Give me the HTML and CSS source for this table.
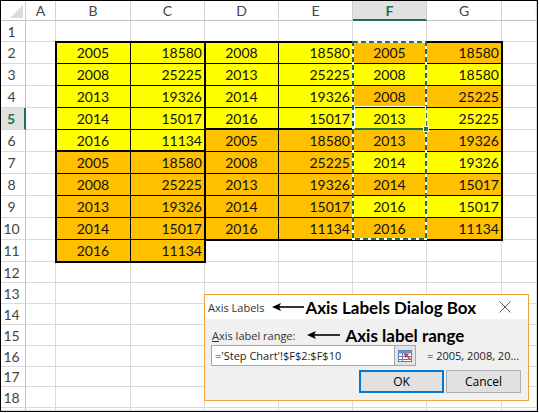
FILE: index.html
```html
<!DOCTYPE html>
<html>
<head>
<meta charset="utf-8">
<link rel="stylesheet" href="styles.css">
</head>
<body>
<div class="frame">
  <div class="sheet">
    <!-- header row -->
    <div class="c hd corner"><svg width="25" height="20" viewBox="0 0 25 20"><polygon points="22,4 22,17 9,17" fill="#dcdcdc"/></svg></div>
    <div class="c hd">A</div>
    <div class="c hd">B</div>
    <div class="c hd">C</div>
    <div class="c hd">D</div>
    <div class="c hd">E</div>
    <div class="c hd hd-sel">F</div>
    <div class="c hd">G</div>
    <div class="c hd hd-h">H</div>

    <!-- data blocks -->
    <div class="blk blk-bc">
      <div class="d y">2005</div><div class="d y n">18580</div>
      <div class="d y">2008</div><div class="d y n">25225</div>
      <div class="d y">2013</div><div class="d y n">19326</div>
      <div class="d y">2014</div><div class="d y n">15017</div>
      <div class="d y sep">2016</div><div class="d y n sep">11134</div>
      <div class="d o">2005</div><div class="d o n">18580</div>
      <div class="d o">2008</div><div class="d o n">25225</div>
      <div class="d o">2013</div><div class="d o n">19326</div>
      <div class="d o">2014</div><div class="d o n">15017</div>
      <div class="d o">2016</div><div class="d o n">11134</div>
    </div>
    <div class="blk blk-de">
      <div class="d y">2008</div><div class="d y n">18580</div>
      <div class="d y">2013</div><div class="d y n">25225</div>
      <div class="d y">2014</div><div class="d y n">19326</div>
      <div class="d y sep">2016</div><div class="d y n sep">15017</div>
      <div class="d o">2005</div><div class="d o n">18580</div>
      <div class="d o">2008</div><div class="d o n">25225</div>
      <div class="d o">2013</div><div class="d o n">19326</div>
      <div class="d o">2014</div><div class="d o n">15017</div>
      <div class="d o">2016</div><div class="d o n">11134</div>
    </div>
    <div class="blk blk-fg">
      <div class="d o">2005</div><div class="d o n">18580</div>
      <div class="d y">2008</div><div class="d y n">18580</div>
      <div class="d o">2008</div><div class="d o n">25225</div>
      <div class="d y">2013</div><div class="d y n">25225</div>
      <div class="d o">2013</div><div class="d o n">19326</div>
      <div class="d y">2014</div><div class="d y n">19326</div>
      <div class="d o">2014</div><div class="d o n">15017</div>
      <div class="d y">2016</div><div class="d y n">15017</div>
      <div class="d o">2016</div><div class="d o n">11134</div>
    </div>

    <!-- row 1 -->
    <div class="c rh">1</div><div class="c"></div><div class="c"></div><div class="c"></div><div class="c"></div><div class="c"></div><div class="c"></div><div class="c"></div><div class="c"></div>
    <!-- rows 2-10 -->
    <div class="c rh">2</div><div class="c"></div><div class="c"></div>
    <div class="c rh">3</div><div class="c"></div><div class="c"></div>
    <div class="c rh">4</div><div class="c"></div><div class="c"></div>
    <div class="c rh rh-sel">5</div><div class="c"></div><div class="c"></div>
    <div class="c rh">6</div><div class="c"></div><div class="c"></div>
    <div class="c rh">7</div><div class="c"></div><div class="c"></div>
    <div class="c rh">8</div><div class="c"></div><div class="c"></div>
    <div class="c rh">9</div><div class="c"></div><div class="c"></div>
    <div class="c rh">10</div><div class="c"></div><div class="c"></div>
    <!-- row 11 -->
    <div class="c rh">11</div><div class="c"></div><div class="c"></div><div class="c"></div><div class="c"></div><div class="c"></div><div class="c"></div>
    <!-- rows 12-19 -->
    <div class="c rh">12</div><div class="c"></div><div class="c"></div><div class="c"></div><div class="c"></div><div class="c"></div><div class="c"></div><div class="c"></div><div class="c"></div>
    <div class="c rh">13</div><div class="c"></div><div class="c"></div><div class="c"></div><div class="c"></div><div class="c"></div><div class="c"></div><div class="c"></div><div class="c"></div>
    <div class="c rh">14</div><div class="c"></div><div class="c"></div><div class="c"></div><div class="c"></div><div class="c"></div><div class="c"></div><div class="c"></div><div class="c"></div>
    <div class="c rh">15</div><div class="c"></div><div class="c"></div><div class="c"></div><div class="c"></div><div class="c"></div><div class="c"></div><div class="c"></div><div class="c"></div>
    <div class="c rh">16</div><div class="c"></div><div class="c"></div><div class="c"></div><div class="c"></div><div class="c"></div><div class="c"></div><div class="c"></div><div class="c"></div>
    <div class="c rh">17</div><div class="c"></div><div class="c"></div><div class="c"></div><div class="c"></div><div class="c"></div><div class="c"></div><div class="c"></div><div class="c"></div>
    <div class="c rh">18</div><div class="c"></div><div class="c"></div><div class="c"></div><div class="c"></div><div class="c"></div><div class="c"></div><div class="c"></div><div class="c"></div>
    <div class="c rh"></div><div class="c"></div><div class="c"></div><div class="c"></div><div class="c"></div><div class="c"></div><div class="c"></div><div class="c"></div><div class="c"></div>
  </div>

  <!-- copy marquee around F2:F10 -->
  <svg class="marquee" width="75" height="199" viewBox="0 0 75 199">
    <rect x="1" y="1" width="73" height="197" fill="none" stroke="#ffffff" stroke-width="2"/>
    <rect x="1" y="1" width="73" height="197" fill="none" stroke="#217346" stroke-width="2" stroke-dasharray="5 3"/>
  </svg>
  <div class="active-cell"><span class="handle"></span></div>

  <!-- dialog -->
  <div class="dialog">
    <div class="dlg-title">
      <span class="dlg-name">Axis Labels</span>
      <svg class="arrow arrow-1" width="32" height="10" viewBox="0 0 32 10"><line x1="5" y1="5" x2="32" y2="5" stroke="#000" stroke-width="1.6"/><polygon points="0,5 9,1 7,5 9,9" fill="#000"/></svg>
      <span class="note">Axis Labels Dialog Box</span>
      <svg class="close" width="12" height="12" viewBox="0 0 12 12"><line x1="0.5" y1="0.5" x2="11.5" y2="11.5" stroke="#555" stroke-width="1"/><line x1="11.5" y1="0.5" x2="0.5" y2="11.5" stroke="#555" stroke-width="1"/></svg>
    </div>
    <div class="dlg-body">
      <div class="lbl-row">
        <span class="lbl"><u>A</u>xis label range:</span>
        <svg class="arrow arrow-2" width="33" height="10" viewBox="0 0 33 10"><line x1="5" y1="5" x2="33" y2="5" stroke="#000" stroke-width="1.6"/><polygon points="0,5 9,1 7,5 9,9" fill="#000"/></svg>
        <span class="note note-2">Axis label range</span>
      </div>
      <div class="input-row">
        <div class="input">='Step Chart'!$F$2:$F$10</div>
        <div class="picker">
          <svg width="14" height="12" viewBox="0 0 14 12">
            <rect x="0.5" y="0.5" width="13" height="11" fill="#ffffff" stroke="#5a7fb5"/>
            <rect x="0.5" y="0.5" width="13" height="3" fill="#6f93c6"/>
            <line x1="4.5" y1="0" x2="4.5" y2="12" stroke="#5a7fb5"/>
            <line x1="0" y1="6.5" x2="14" y2="6.5" stroke="#5a7fb5"/>
            <line x1="0" y1="9.5" x2="14" y2="9.5" stroke="#5a7fb5"/>
            <line x1="12" y1="9" x2="8" y2="5" stroke="#d9342b" stroke-width="1.6"/>
            <polygon points="6,3 11,4 7,8" fill="#d9342b"/>
          </svg>
        </div>
        <span class="preview">= 2005, 2008, 20...</span>
      </div>
      <div class="btn-row">
        <button class="btn btn-ok">OK</button>
        <button class="btn btn-cancel">Cancel</button>
      </div>
    </div>
  </div>
</div>
</body>
</html>
```

FILE: styles.css
```css
body {
  margin: 0;
  background: #ffffff;
}

.frame {
  position: relative;
  width: 538px;
  height: 412px;
  box-sizing: border-box;
  border: 1px solid #000000;
  overflow: hidden;
  font-family: Lato, "Open Sans", sans-serif;
  font-size: 14px;
  color: #000000;
}

.sheet {
  display: grid;
  grid-template-columns: 25px 30px 75px 74px 74px 74px 74px 75px 1fr;
  grid-template-rows: 20px 21px repeat(10, 22px) repeat(5, 21px) 20px 21px 1fr;
  height: 100%;
}

.c {
  box-sizing: border-box;
  border-right: 1px solid #dadada;
  border-bottom: 1px solid #dadada;
  min-width: 0;
  overflow: hidden;
}

.hd {
  display: flex;
  align-items: center;
  justify-content: center;
  color: #444444;
  border-right-color: #d0d0d0;
  border-bottom-color: #c4c4c4;
}

.corner {
  display: block;
}

.corner svg {
  display: block;
}

.hd-sel {
  background: #e1e1e1;
  color: #217346;
  font-weight: 700;
  border-bottom: 2px solid #217346;
}

.hd-h {
  justify-content: flex-start;
  padding-left: 33px;
}

.rh {
  display: flex;
  align-items: center;
  justify-content: center;
  padding-right: 3px;
  color: #444444;
  border-right-color: #c4c4c4;
}

.rh-sel {
  background: #e1e1e1;
  color: #217346;
  font-weight: 700;
  border-right: 2px solid #217346;
}

.blk {
  display: grid;
  grid-auto-rows: 22px;
  outline: 2px solid #000000;
  outline-offset: -1px;
  position: relative;
  z-index: 1;
}

.blk-bc {
  grid-row: 3 / 13;
  grid-column: 3 / 5;
  grid-template-columns: 75px 74px;
}

.blk-de {
  grid-row: 3 / 12;
  grid-column: 5 / 7;
  grid-template-columns: 74px 74px;
}

.blk-fg {
  grid-row: 3 / 12;
  grid-column: 7 / 9;
  grid-template-columns: 74px 75px;
}

.d {
  box-sizing: border-box;
  display: flex;
  align-items: center;
  justify-content: center;
  border-right: 1px solid #000000;
  border-bottom: 1px solid #000000;
  color: #111111;
}

.n {
  justify-content: flex-end;
  padding-right: 2px;
}

.y {
  background: #ffff00;
}

.o {
  background: #ffc000;
}

.sep {
  border-bottom-width: 2px;
}

.marquee {
  position: absolute;
  left: 351px;
  top: 40px;
  z-index: 2;
}

.active-cell {
  position: absolute;
  left: 353px;
  top: 105px;
  width: 72px;
  height: 24px;
  box-sizing: border-box;
  border: 1px solid #ffffff;
  border-bottom: 2px solid #217346;
  z-index: 3;
}

.handle {
  position: absolute;
  right: -4px;
  bottom: -4px;
  width: 6px;
  height: 6px;
  box-sizing: border-box;
  background: #217346;
  border: 1px solid #ffffff;
}

.dialog {
  position: absolute;
  left: 203px;
  top: 293px;
  width: 325px;
  height: 107px;
  box-sizing: border-box;
  border: 1px solid #f0a33a;
  background: #f0f0f0;
  display: flex;
  flex-direction: column;
  z-index: 4;
  font-family: "Open Sans", sans-serif;
  font-size: 11px;
  color: #222222;
}

.dlg-title {
  height: 24px;
  flex: none;
  background: #ffffff;
  display: flex;
  align-items: center;
  padding-left: 3px;
}

.dlg-name {
  color: #333333;
}

.arrow {
  display: block;
  flex: none;
}

.arrow-1 {
  margin-left: 8px;
}

.note {
  font-family: Lato, sans-serif;
  font-weight: 700;
  font-size: 17px;
  color: #000000;
  margin-left: 1px;
}

.close {
  display: block;
  margin-left: auto;
  margin-right: 17px;
}

.dlg-body {
  padding: 6px 7px 0 6px;
  display: flex;
  flex-direction: column;
}

.lbl-row {
  height: 20px;
  display: flex;
  align-items: center;
}

.lbl {
  padding-left: 1px;
  color: #333333;
}

.arrow-2 {
  margin-left: 12px;
}

.note-2 {
  margin-left: 5px;
}

.input-row {
  height: 21px;
  display: flex;
  align-items: center;
}

.input {
  width: 184px;
  height: 21px;
  box-sizing: border-box;
  border: 1px solid #a9a9a9;
  background: #ffffff;
  padding-left: 3px;
  display: flex;
  align-items: center;
  color: #222222;
}

.picker {
  width: 21px;
  height: 21px;
  box-sizing: border-box;
  border: 1px solid #a9a9a9;
  border-left: none;
  background: #e4e4e4;
  display: flex;
  align-items: center;
  justify-content: center;
}

.picker svg {
  display: block;
}

.preview {
  margin-left: 11px;
  color: #222222;
}

.btn-row {
  display: flex;
  justify-content: flex-end;
  gap: 2px;
  margin-top: 4px;
}

.btn {
  height: 23px;
  box-sizing: border-box;
  background: #e1e1e1;
  border: 1px solid #adadad;
  font-family: "Open Sans", sans-serif;
  font-size: 12px;
  color: #000000;
  padding: 0;
}

.btn-ok {
  width: 85px;
  border: 2px solid #0078d7;
}

.btn-cancel {
  width: 75px;
}
```
